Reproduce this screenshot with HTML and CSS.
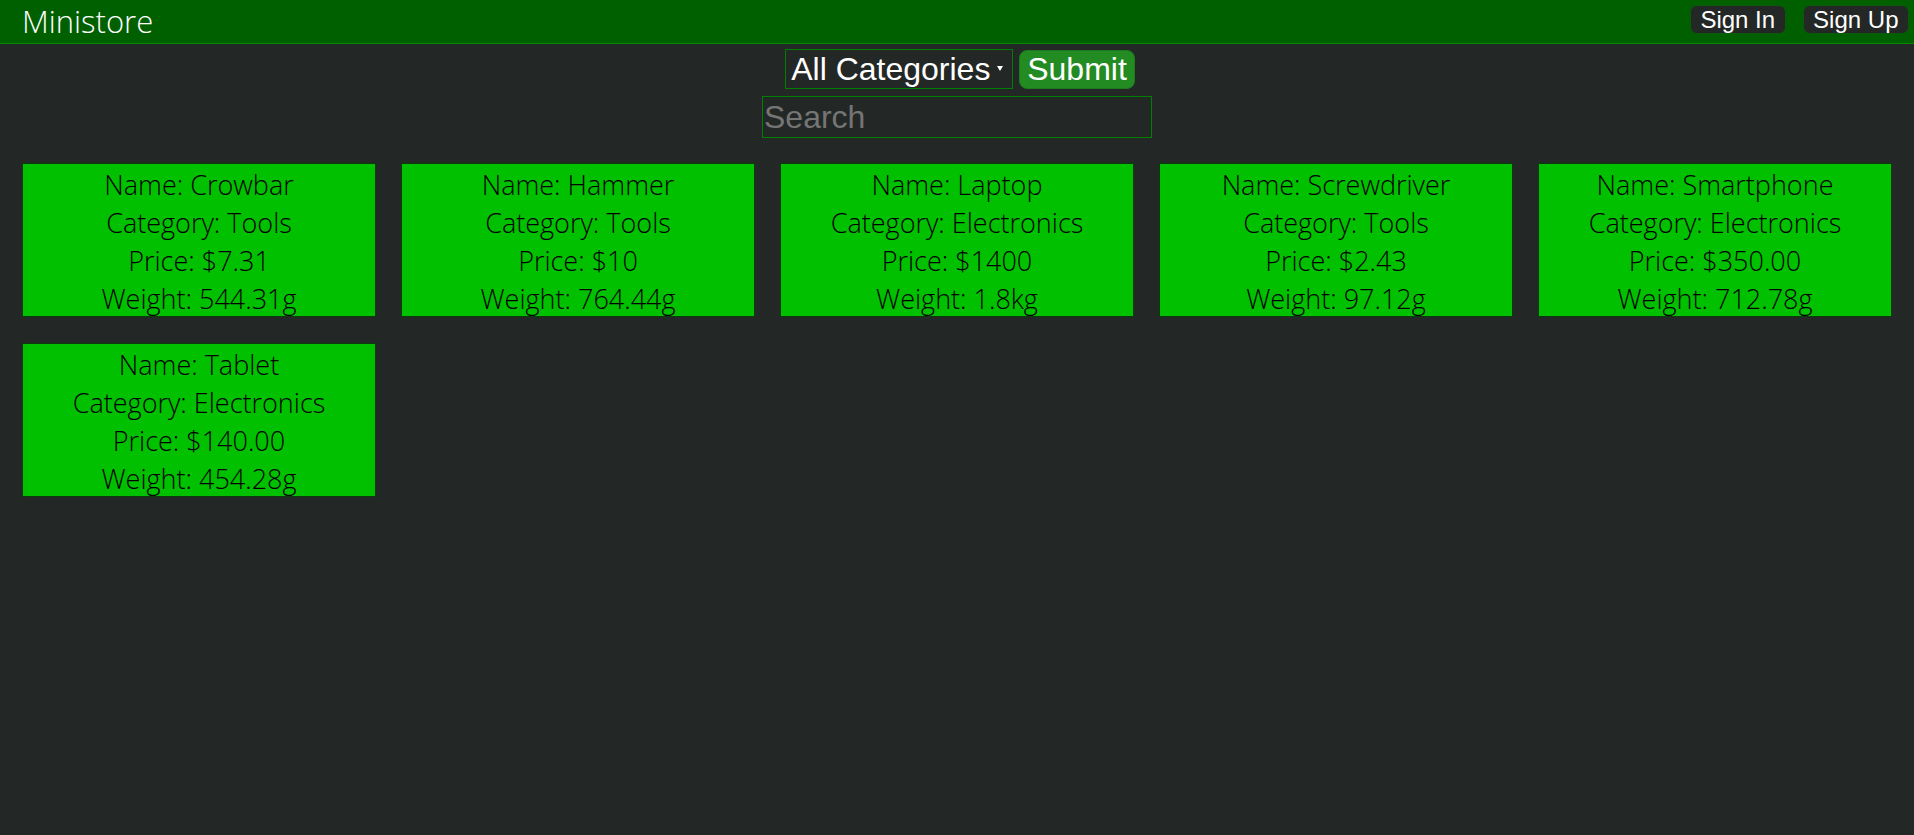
FILE: index.html
```html
<!DOCTYPE html>
<html>
<head>
<meta charset="utf-8">
<title>Ministore</title>
<link rel="stylesheet" href="styles.css">
</head>
<body>
<header class="topbar">
  <div class="brand">Ministore</div>
  <nav class="auth">
    <button class="auth-btn">Sign In</button>
    <button class="auth-btn">Sign Up</button>
  </nav>
</header>
<main class="content">
  <form class="filters">
    <div class="filter-row">
      <div class="select-wrap">
        <select class="category-select">
          <option>All Categories</option>
          <option>Tools</option>
          <option>Electronics</option>
        </select>
      </div>
      <button type="button" class="submit-btn">Submit</button>
    </div>
    <input class="search" type="text" placeholder="Search">
  </form>
  <section class="grid">
    <div class="card"><div>Name: Crowbar</div><div>Category: Tools</div><div>Price: $7.31</div><div>Weight: 544.31g</div></div>
    <div class="card"><div>Name: Hammer</div><div>Category: Tools</div><div>Price: $10</div><div>Weight: 764.44g</div></div>
    <div class="card"><div>Name: Laptop</div><div>Category: Electronics</div><div>Price: $1400</div><div>Weight: 1.8kg</div></div>
    <div class="card"><div>Name: Screwdriver</div><div>Category: Tools</div><div>Price: $2.43</div><div>Weight: 97.12g</div></div>
    <div class="card"><div>Name: Smartphone</div><div>Category: Electronics</div><div>Price: $350.00</div><div>Weight: 712.78g</div></div>
    <div class="card"><div>Name: Tablet</div><div>Category: Electronics</div><div>Price: $140.00</div><div>Weight: 454.28g</div></div>
  </section>
</main>
</body>
</html>
```
FILE: styles.css
```css
* { box-sizing: border-box; }
html, body {
  margin: 0;
  padding: 0;
  background: #232725;
  height: 100%;
}
body {
  font-family: "Open Sans", "Segoe UI", sans-serif;
}
.topbar {
  height: 44px;
  background: #006000;
  border-bottom: 1px solid #008a00;
  display: flex;
  align-items: center;
  justify-content: space-between;
  padding: 0 5px 0 22px;
}
.brand {
  color: #ffffff;
  font-family: "Open Sans", sans-serif;
  font-weight: 300;
  font-size: 31px;
  line-height: 43px;
}
.auth {
  display: flex;
  gap: 17px;
  align-self: flex-start;
  margin-top: 5px;
}
.auth-btn {
  font-family: "Liberation Sans", Arial, sans-serif;
  font-size: 24px;
  color: #ffffff;
  background: #232725;
  border: 1px solid #0a5a0a;
  border-radius: 7px;
  height: 29px;
  padding: 0 9.5px;
  line-height: 27px;
}
.filters {
  display: flex;
  flex-direction: column;
  align-items: center;
  padding-top: 5px;
  gap: 7px;
}
.filter-row {
  display: flex;
  align-items: center;
  gap: 6px;
  margin-left: 6px;
}
.select-wrap {
  position: relative;
}
.select-wrap::after {
  content: "";
  position: absolute;
  right: 10px;
  top: 17px;
  border-left: 3px solid transparent;
  border-right: 3px solid transparent;
  border-top: 5px solid #ffffff;
  pointer-events: none;
}
.category-select {
  appearance: none;
  -webkit-appearance: none;
  font-family: "Liberation Sans", Arial, sans-serif;
  font-size: 32px;
  color: #ffffff;
  background: #232725;
  border: 1px solid #008000;
  border-radius: 0;
  height: 40px;
  width: 228px;
  padding: 0 0 0 5px;
  line-height: 38px;
}
.submit-btn {
  font-family: "Liberation Sans", Arial, sans-serif;
  font-size: 32px;
  color: #ffffff;
  background: #228b22;
  border: 1px solid #1d7a1d;
  border-radius: 8px;
  height: 39px;
  padding: 0 7px;
  line-height: 37px;
}
.search {
  font-family: "Liberation Sans", Arial, sans-serif;
  font-size: 32px;
  color: #ffffff;
  background: #232725;
  border: 1px solid #008000;
  width: 390px;
  height: 42px;
  padding: 0 1px;
  outline: none;
}
.search::placeholder {
  color: #757575;
}
.grid {
  display: grid;
  grid-template-columns: repeat(5, 1fr);
  column-gap: 25px;
  row-gap: 26px;
  padding: 25px 22px;
}
.card {
  background: #00c000;
  border: 1px solid #0b3d0b;
  text-align: center;
  font-family: "Open Sans", sans-serif;
  font-weight: 300;
  font-size: 27px;
  line-height: 38px;
  color: #000000;
  height: 154px;
  padding-top: 2px;
  overflow: hidden;
}
```
